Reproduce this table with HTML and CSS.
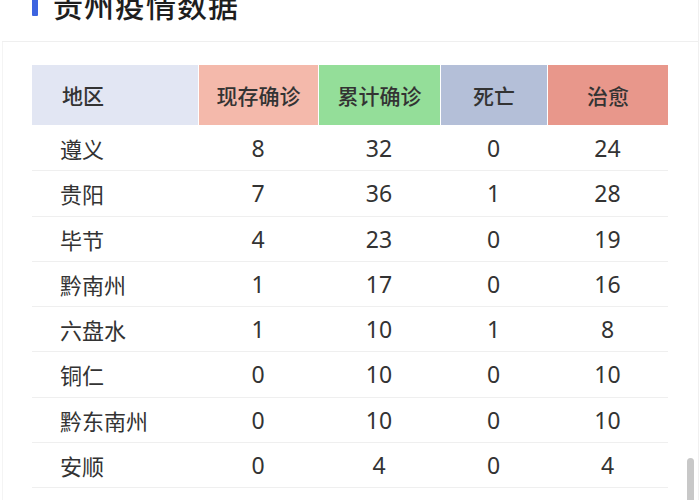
FILE: index.html
```html
<!DOCTYPE html>
<html lang="zh-CN">
<head>
<meta charset="utf-8">
<link rel="stylesheet" href="styles.css">
</head>
<body>
<div class="page">
  <div class="head">
    <span class="bar"></span>
    <h1 class="title">贵州疫情数据</h1>
  </div>
  <div class="card">
    <div class="table">
      <div class="row header">
        <div class="cell name c-area">地区</div>
        <div class="cell c-now">现存确诊</div>
        <div class="cell c-total">累计确诊</div>
        <div class="cell c-dead">死亡</div>
        <div class="cell c-cure">治愈</div>
      </div>
      <div class="row"><div class="cell name">遵义</div><div class="cell">8</div><div class="cell">32</div><div class="cell">0</div><div class="cell">24</div></div>
      <div class="row"><div class="cell name">贵阳</div><div class="cell">7</div><div class="cell">36</div><div class="cell">1</div><div class="cell">28</div></div>
      <div class="row"><div class="cell name">毕节</div><div class="cell">4</div><div class="cell">23</div><div class="cell">0</div><div class="cell">19</div></div>
      <div class="row"><div class="cell name">黔南州</div><div class="cell">1</div><div class="cell">17</div><div class="cell">0</div><div class="cell">16</div></div>
      <div class="row"><div class="cell name">六盘水</div><div class="cell">1</div><div class="cell">10</div><div class="cell">1</div><div class="cell">8</div></div>
      <div class="row"><div class="cell name">铜仁</div><div class="cell">0</div><div class="cell">10</div><div class="cell">0</div><div class="cell">10</div></div>
      <div class="row"><div class="cell name">黔东南州</div><div class="cell">0</div><div class="cell">10</div><div class="cell">0</div><div class="cell">10</div></div>
      <div class="row"><div class="cell name">安顺</div><div class="cell">0</div><div class="cell">4</div><div class="cell">0</div><div class="cell">4</div></div>
      <div class="row"><div class="cell name">黔西南州</div><div class="cell">0</div><div class="cell">4</div><div class="cell">0</div><div class="cell">4</div></div>
    </div>
  </div>
  <div class="scrollbar"></div>
</div>
</body>
</html>
```
FILE: styles.css
```css
html, body {
  margin: 0;
  padding: 0;
  background: #ffffff;
  overflow: hidden;
}
body {
  font-family: "Noto Sans", "Noto Sans CJK SC", sans-serif;
  color: #333333;
}
.page {
  position: relative;
  width: 698px;
  height: 500px;
  border-right: 1px solid #f0f0f0;
  overflow: hidden;
}
.head {
  margin-top: -14px;
  height: 56px;
  box-sizing: border-box;
  padding-left: 32px;
  display: flex;
  align-items: flex-start;
  gap: 15px;
  border-bottom: 1px solid #efefef;
  margin-left: 2px;
}
.bar {
  width: 6px;
  height: 24px;
  margin-top: 6px;
  margin-left: -2px;
  background: #3d64e0;
  border-radius: 1px;
}
.title {
  margin: 0;
  font-family: "Noto Sans CJK SC", sans-serif;
  font-size: 30px;
  line-height: 36px;
  font-weight: 500;
  color: #1e1e1e;
  letter-spacing: 1px;
}
.card {
  margin-left: 2px;
  border-left: 1px solid #f4f4f4;
  padding-top: 23px;
  padding-left: 29px;
}
.table {
  width: 636px;
}
.row {
  display: grid;
  grid-template-columns: 166px 120px 122px 107px 121px;
  height: 45.25px;
  box-sizing: border-box;
  border-bottom: 1px solid #efefef;
  align-items: center;
  font-size: 23px;
}
.cell {
  text-align: center;
  line-height: 30px;
}
.cell.name {
  text-align: left;
  padding-left: 28px;
  font-family: "Noto Sans CJK SC", sans-serif;
  font-size: 22px;
}
.row.header {
  height: 61px;
  border-bottom: none;
  align-items: stretch;
  font-family: "Noto Sans CJK SC", sans-serif;
  font-size: 21px;
  font-weight: 500;
}
.row.header .cell {
  display: flex;
  align-items: center;
  justify-content: center;
  border-left: 1px solid #ffffff;
  border-bottom: 1px solid #ffffff;
  font-size: 21px;
}
.row.header .cell.name {
  justify-content: flex-start;
  padding-left: 30px;
  border-left: none;
}
.c-area { background: #e2e6f3; }
.c-now { background: #f4b9ab; }
.c-total { background: #94de99; }
.c-dead { background: #b4bfd8; }
.c-cure { background: #e8978b; }
.scrollbar {
  position: absolute;
  left: 687px;
  top: 458px;
  width: 7px;
  height: 60px;
  border-radius: 4px;
  background: #c8c8c8;
}
```
